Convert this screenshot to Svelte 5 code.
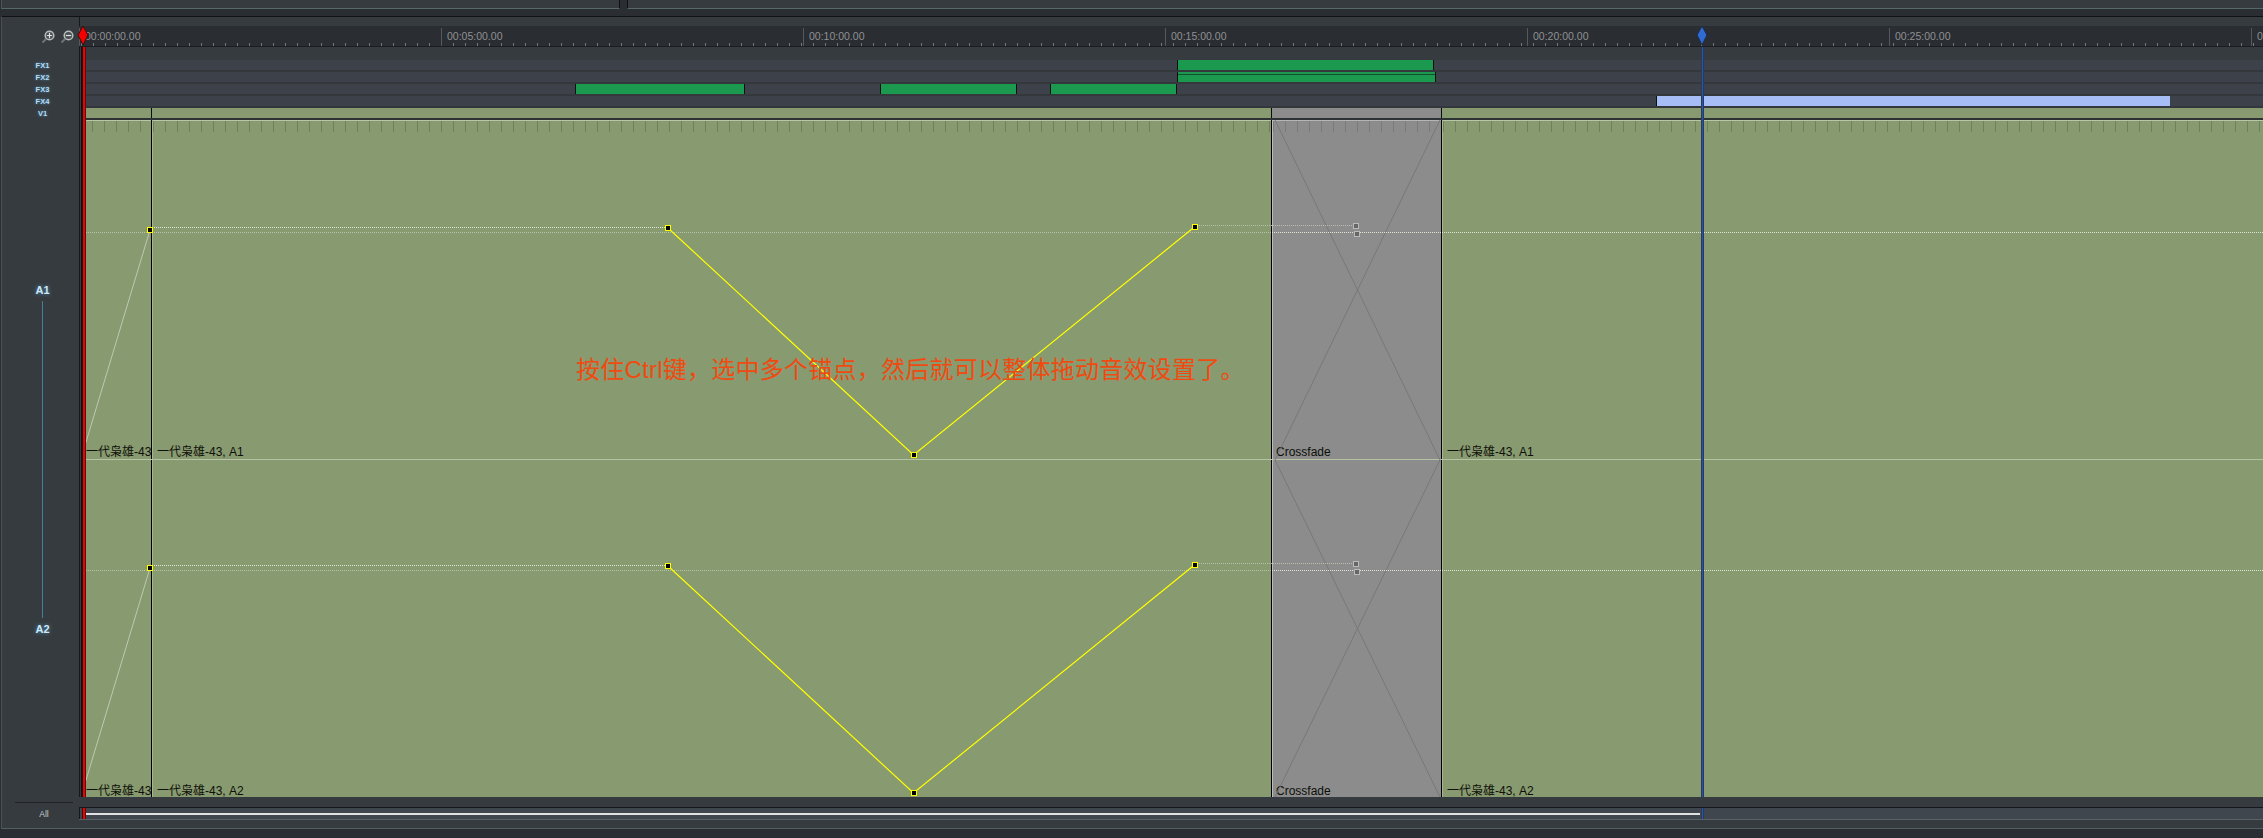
<script>
  // x positions below are relative to the timeline column (page x - 80)
  const times = ["00:00:00.00", "00:05:00.00", "00:10:00.00", "00:15:00.00", "00:20:00.00", "00:25:00.00", "00:30:00.00"];

  const fxTracks = [
    { name: "FX1", clips: [{ x: 1097, w: 257, split: false }] },
    { name: "FX2", clips: [{ x: 1097, w: 259, split: true }] },
    {
      name: "FX3",
      clips: [
        { x: 495, w: 170, split: false },
        { x: 800, w: 137, split: false },
        { x: 970, w: 127, split: false },
      ],
    },
    { name: "FX4", clips: [{ x: 1576, w: 514, blue: true }] },
  ];

  const audioTracks = [
    { name: "A1", shift: 0, height: 340 },
    { name: "A2", shift: 338, height: 337 },
  ];

  // envelope points, relative to the top of A1
  const anchors = [
    [70, 110],
    [588, 108],
    [833.5, 335],
    [1115, 106.5],
  ];
  const yellowPath = anchors.slice(1).map((p) => p.join(",")).join(" ");
</script>

<div class="page">
  <div class="topbar">
    <div class="top-panel left"></div>
    <div class="top-panel"></div>
  </div>

  <div class="panel">
    <aside class="side">
      <div class="zoom-buttons">
        <svg width="14" height="14" viewBox="0 0 14 14">
          <circle cx="8.5" cy="5.5" r="4.3" fill="#4a4f52" stroke="#b9bcbd" stroke-width="1.5" />
          <path d="M5.8 5.5h5.4M8.5 2.8v5.4" stroke="#e2e4e4" stroke-width="1.2" />
          <path d="M5 9L1.5 12.5" stroke="#6f7477" stroke-width="2" />
        </svg>
        <svg width="14" height="14" viewBox="0 0 14 14">
          <circle cx="8.5" cy="5.5" r="4.3" fill="#4a4f52" stroke="#b9bcbd" stroke-width="1.5" />
          <path d="M5.8 5.5h5.4" stroke="#e2e4e4" stroke-width="1.2" />
          <path d="M5 9L1.5 12.5" stroke="#6f7477" stroke-width="2" />
        </svg>
      </div>
      <div class="side-names">
        {#each fxTracks as t}
          <div class="small-name">{t.name}</div>
        {/each}
        <div class="small-name">V1</div>
      </div>
      <div class="level">
        <div class="big-name">A1</div>
        <div class="level-line"></div>
        <div class="big-name">A2</div>
      </div>
    </aside>

    <section class="timeline">
      <div class="ruler">
        {#each times as t}
          <div class="ruler-cell">{t}</div>
        {/each}
      </div>

      <div class="fx-tracks">
        {#each fxTracks as t}
          <div class="fx-track">
            {#each t.clips as c}
              <div
                class="fx-clip"
                class:blue={c.blue}
                class:split={c.split}
                style="left:{c.x}px;width:{c.w}px"
              ></div>
            {/each}
          </div>
        {/each}
      </div>

      <div class="v-track">
        <div class="v-clip" style="width:72px"></div>
        <div class="v-clip" style="width:1120px"></div>
        <div class="v-clip cross" style="width:170px"></div>
        <div class="v-clip rest"></div>
      </div>

      <div class="audio">
        {#each audioTracks as t}
          <div class="audio-track" style="height:{t.height}px">
            <div class="clip" style="width:72px"><span>一代枭雄-43</span></div>
            <div class="clip" style="width:1120px"><span>一代枭雄-43, {t.name}</span></div>
            <div class="clip cross" style="width:170px"><span>Crossfade</span></div>
            <div class="clip rest"><span>一代枭雄-43, {t.name}</span></div>
          </div>
        {/each}

        <svg class="curves" width="2183" height="677">
          <line x1="1195" y1="0" x2="1360" y2="340" class="x-line" />
          <line x1="1360" y1="0" x2="1195" y2="340" class="x-line" />
          <line x1="1195" y1="340" x2="1360" y2="677" class="x-line" />
          <line x1="1360" y1="340" x2="1195" y2="677" class="x-line" />

          {#each audioTracks as t}
            <g transform="translate(0,{t.shift})">
              <line x1="4" y1="112.5" x2="1192" y2="112.5" class="dots faint" />
              <line x1="1192" y1="112.5" x2="2183" y2="112.5" class="dots" />
              <line x1="72" y1="107.5" x2="588" y2="107.5" class="dots" />
              <line x1="1115" y1="105.5" x2="1275" y2="105.5" class="dots faint" />
              <line x1="3" y1="332" x2="70" y2="110" class="ramp" />
              <polyline points={yellowPath} class="envelope" />
              {#each anchors as p}
                <rect x={Math.round(p[0]) - 2.5} y={Math.round(p[1]) - 2.5} width="5" height="5" class="anchor" />
              {/each}
              <rect x="1273.5" y="103.5" width="5" height="5" class="grey-anchor" />
              <rect x="1274.5" y="111.5" width="5" height="5" class="grey-anchor" />
            </g>
          {/each}
        </svg>

        <div class="note">按住Ctrl键，选中多个锚点，然后就可以整体拖动音效设置了。</div>
      </div>

      <div class="playhead red"></div>
      <div class="playhead blue"></div>
      <svg class="head red-head" width="12" height="20" viewBox="0 0 12 20">
        <path d="M6 0L11 9L6 19L1 9Z" fill="#f40000" stroke="#3a1010" stroke-width="1" />
      </svg>
      <svg class="head blue-head" width="12" height="20" viewBox="0 0 12 20">
        <path d="M6 0L11 9L6 19L1 9Z" fill="#2f6bd0" stroke="#1d2a44" stroke-width="1" />
      </svg>
    </section>

    <div class="all-cell"><span>All</span></div>
    <div class="overview">
      <div class="overview-bar"></div>
      <div class="mark red"></div>
      <div class="mark blue"></div>
    </div>
  </div>
</div>

<style>
  :global(body) {
    margin: 0;
    background: #2a2d31;
  }

  .page {
    width: 2263px;
    height: 838px;
    overflow: hidden;
    font-family: "Liberation Sans", "Noto Sans CJK SC", sans-serif;
    background: #2a2d31;
  }

  .topbar {
    display: flex;
    gap: 7px;
    height: 9px;
    margin-bottom: 7px;
  }

  .top-panel {
    flex: 1;
    background: #363b3f;
    border-bottom: 1px solid #56686a;
    border-left: 1px solid #111;
  }

  .top-panel.left {
    flex: 0 0 617px;
    border-right: 1px solid #111;
    border-left: 1px solid #4a5658;
    margin-left: 1px;
  }

  .panel {
    display: grid;
    grid-template-columns: 78px 1fr;
    grid-template-rows: 780px 13px;
    height: 813px;
    box-sizing: border-box;
    border-top: 1px solid #0f1113;
    border-left: 1px solid #4a5254;
    border-bottom: 1px solid #555f60;
    margin-left: 1px;
    background: #363b3f;
    row-gap: 10px;
  }

  .side {
    position: relative;
  }

  .zoom-buttons {
    display: flex;
    gap: 5px;
    justify-content: flex-end;
    padding: 13px 6px 0 0;
    height: 17px;
  }

  .side-names {
    margin-top: 13px;
  }

  .small-name {
    height: 12px;
    line-height: 12px;
    text-align: center;
    margin-left: 3px;
    font-size: 7.5px;
    font-weight: bold;
    color: #b8dcf2;
    text-shadow: 0 0 3px #4f97c4;
  }

  .level {
    margin-top: 163px;
    display: flex;
    flex-direction: column;
    align-items: center;
    margin-left: 3px;
  }

  .big-name {
    font-size: 11px;
    font-weight: bold;
    line-height: 14px;
    color: #cfe8f8;
    text-shadow: 0 0 4px #4f97c4;
  }

  .level-line {
    width: 1px;
    height: 317px;
    margin: 4px 0;
    background: #3f7f99;
  }

  .timeline {
    position: relative;
    min-width: 0;
    border-left: 1px solid #15171a;
    margin-left: -1px;
  }

  .ruler {
    display: flex;
    height: 20px;
    margin-top: 9px;
    margin-left: -1px;
    overflow: hidden;
    color: #8f9193;
    font-size: 10.5px;
    background-color: #2a2d32;
    background-image: repeating-linear-gradient(to right, #73767a 0 1px, transparent 1px 12px);
    background-size: 100% 3px;
    background-position: 2px 17px;
    background-repeat: no-repeat;
    border-bottom: 1px solid #1b1d20;
  }

  .ruler-cell {
    flex: 0 0 362px;
    box-sizing: border-box;
    border-left: 1px solid #55585c;
    height: 18px;
    margin-top: 2px;
    padding-left: 5px;
    line-height: 16px;
  }

  .fx-tracks {
    margin-top: 13px;
  }

  .fx-track {
    position: relative;
    height: 10px;
    margin-bottom: 2px;
    background: #3d424a;
    box-shadow: 0 2px 0 #34383c;
  }

  .fx-clip {
    position: absolute;
    top: 0;
    bottom: 0;
    box-sizing: border-box;
    background: #1b9a4f;
    border-left: 1px solid #0d0f10;
    border-right: 1px solid #0d0f10;
  }

  .fx-clip.split {
    background: linear-gradient(#1b9a4f 0 2px, #14502f 2px 3px, #1b9a4f 3px);
  }

  .fx-clip.blue {
    background: #a6bdf5;
    border-right: none;
  }

  .v-track {
    display: flex;
    height: 12px;
    box-sizing: border-box;
    border-bottom: 2px solid #2d3234;
  }

  .v-clip {
    box-sizing: border-box;
    background: #889a70;
    border-right: 1px solid #0c0c0c;
  }

  .v-clip.rest,
  .clip.rest {
    flex: 1;
    border-right: none;
  }

  .v-clip.cross {
    background: #8c8c8c;
  }

  .audio {
    position: relative;
    overflow: hidden;
  }

  .audio-track {
    display: flex;
    box-sizing: border-box;
    border-bottom: 1px solid #b6c2a4;
  }

  .audio-track + .audio-track {
    border-bottom: none;
  }

  .clip {
    display: flex;
    align-items: flex-end;
    box-sizing: border-box;
    overflow: hidden;
    padding: 0 0 0 4px;
    background-color: #889a70;
    background-image:
      repeating-linear-gradient(to right, #6f8158 0 1px, transparent 1px 12px),
      linear-gradient(#b9c6a5, #b9c6a5);
    background-size: 100% 11px, 100% 1px;
    background-position: 0 1px, 0 0;
    background-repeat: no-repeat;
    border-right: 1px solid #000;
    border-left: 1px solid #a8b690;
    color: #0d0f08;
    font-size: 12px;
    line-height: 14px;
    white-space: nowrap;
  }

  .clip:first-child {
    border-left: none;
    padding-left: 6px;
  }

  .clip.cross {
    padding-left: 3px;
    background-color: #8c8c8c;
    border-left-color: #bcbcbc;
    background-image:
      repeating-linear-gradient(to right, #7a7a7a 0 1px, transparent 1px 12px),
      linear-gradient(#b5b5b5, #b5b5b5);
  }

  .audio-track + .audio-track .clip {
    background-image: none;
    line-height: 12px;
  }

  .curves {
    position: absolute;
    left: 0;
    top: 0;
    pointer-events: none;
  }

  .x-line {
    stroke: #787878;
    stroke-width: 1;
  }

  .dots {
    stroke: #dfe5d4;
    stroke-width: 1;
    stroke-dasharray: 1 1;
  }

  .dots.faint {
    stroke: #c4ccb4;
    opacity: 0.8;
  }

  .ramp {
    stroke: #c9d1bc;
    stroke-width: 1;
    opacity: 0.85;
  }

  .envelope {
    fill: none;
    stroke: #ffff00;
    stroke-width: 1.2;
  }

  .anchor {
    fill: #000;
    stroke: #ffff00;
    stroke-width: 1;
    shape-rendering: crispEdges;
  }

  .grey-anchor {
    fill: #666;
    stroke: #bbb;
    stroke-width: 1;
    shape-rendering: crispEdges;
  }

  .note {
    position: absolute;
    left: 496px;
    top: 233px;
    color: #f04a10;
    font-size: 24px;
    letter-spacing: 0.25px;
    line-height: 34px;
    white-space: nowrap;
  }

  .playhead {
    position: absolute;
    top: 30px;
    bottom: 0;
    box-sizing: border-box;
  }

  .playhead.red {
    left: 0;
    width: 6px;
    background: linear-gradient(to right, #363b3f 0 1px, #14100f 1px 3px, #f00000 3px 5px, #5a0d0d 5px);
  }

  .playhead.blue {
    left: 1621px;
    width: 3px;
    background: #1f55bd;
    border-left: 1px solid #2c3a52;
    border-right: 1px solid #2c3a52;
  }

  .head {
    position: absolute;
    top: 9px;
  }

  .red-head {
    left: -3px;
  }

  .blue-head {
    left: 1616px;
  }

  .all-cell {
    display: flex;
    align-items: center;
    justify-content: center;
    color: #c8cacb;
    font-size: 8.5px;
    margin: -6px 7px 0 13px;
    position: relative;
    top: 1px;
    border-top: 1px solid #222;
    height: 14px;
    padding-top: 4px;
  }

  .overview {
    position: relative;
    margin-left: -1px;
    background: #3f464d;
    border-top: 1px solid #15171a;
    border-bottom: 1px solid #5a6266;
    box-shadow: inset 1px 0 0 #15171a;
  }

  .overview-bar {
    position: absolute;
    left: 6px;
    width: 1615px;
    top: 5px;
    height: 2px;
    background: #e2e2e2;
  }

  .mark {
    position: absolute;
    top: 0;
    bottom: 0;
    box-sizing: border-box;
  }

  .mark.red {
    left: 3px;
    width: 4px;
    background: #f00000;
    border-left: 1px solid #2a0a0a;
    border-right: 1px solid #5a0d0d;
  }

  .mark.blue {
    left: 1622px;
    width: 3px;
    background: #1f55bd;
    border-left: 1px solid #2c3a52;
    border-right: 1px solid #2c3a52;
  }
</style>
